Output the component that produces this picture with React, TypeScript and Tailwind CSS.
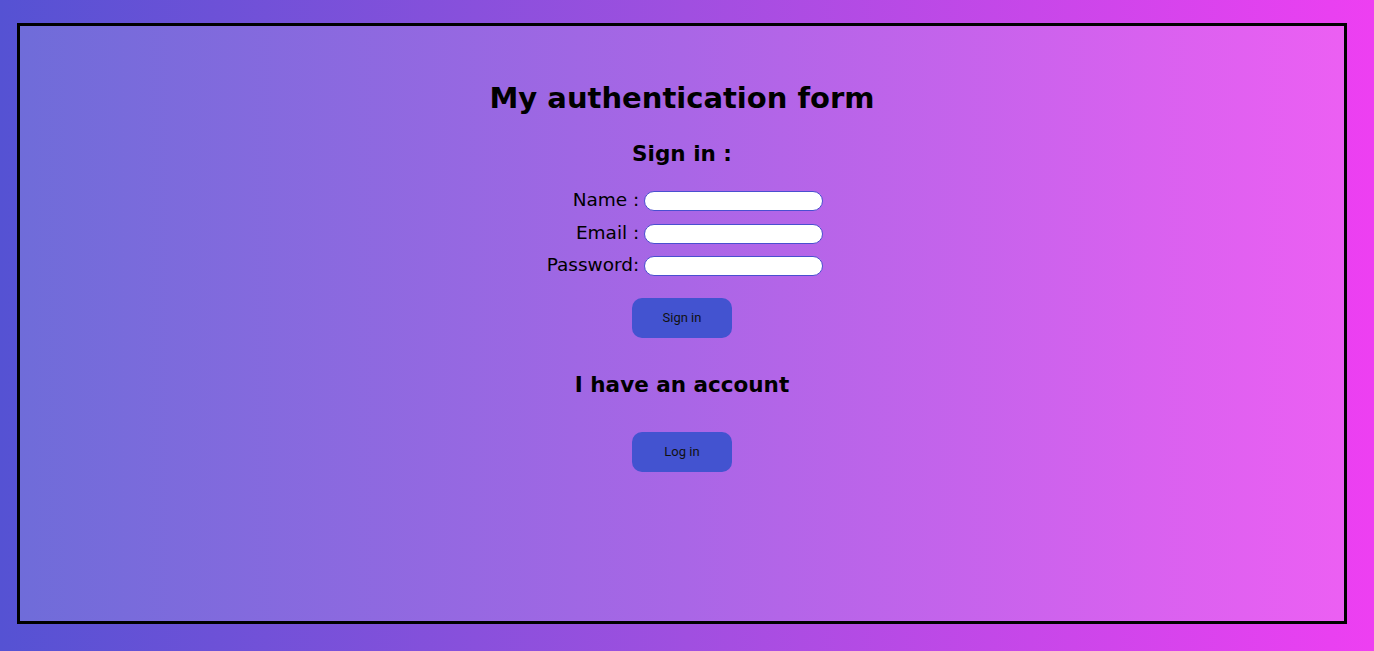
import React from "react";

export default function App() {
  return (
    <div className="w-[1374px] h-[651px] bg-[linear-gradient(to_right,#5552d3,#a04fe0_50%,#ee3ff2)] pt-[23px] pl-[17px]" style={{ fontFamily: '"DejaVu Sans", sans-serif' }}>
      <div className="w-[1330px] h-[601px] border-[3px] border-black bg-[linear-gradient(to_right,#6f6cd9,#a966e6_50%,#ec5ff3)] flex flex-col items-center">
        <h1 className="mt-[52px] text-[29px] leading-[40px] font-bold text-black">My authentication form</h1>
        <h2 className="mt-[21px] text-[21.5px] leading-[30px] font-bold text-black">Sign in :</h2>
        <div className="mt-[22px] grid grid-cols-[auto_auto] gap-x-[5px] gap-y-[12.5px] text-[18.5px] text-black ml-[6px]">
          {["Name :", "Email :", "Password:"].map((l) => (
            <React.Fragment key={l}>
              <span className="text-right leading-[18px] h-[20px]">{l}</span>
              <input className="w-[179px] h-[20px] rounded-full bg-white border border-[#4a4fd0] outline-none" />
            </React.Fragment>
          ))}
        </div>
        <button className="mt-[22px] w-[100px] h-[40px] rounded-[10px] bg-[#4353d0] text-[13px] text-[#111]" style={{ fontFamily: 'Roboto, sans-serif' }}>Sign in</button>
        <h2 className="mt-[32px] text-[21.5px] leading-[30px] font-bold text-black">I have an account</h2>
        <button className="mt-[32px] w-[100px] h-[40px] rounded-[10px] bg-[#4353d0] text-[13px] text-[#111]" style={{ fontFamily: 'Roboto, sans-serif' }}>Log in</button>
      </div>
    </div>
  );
}
